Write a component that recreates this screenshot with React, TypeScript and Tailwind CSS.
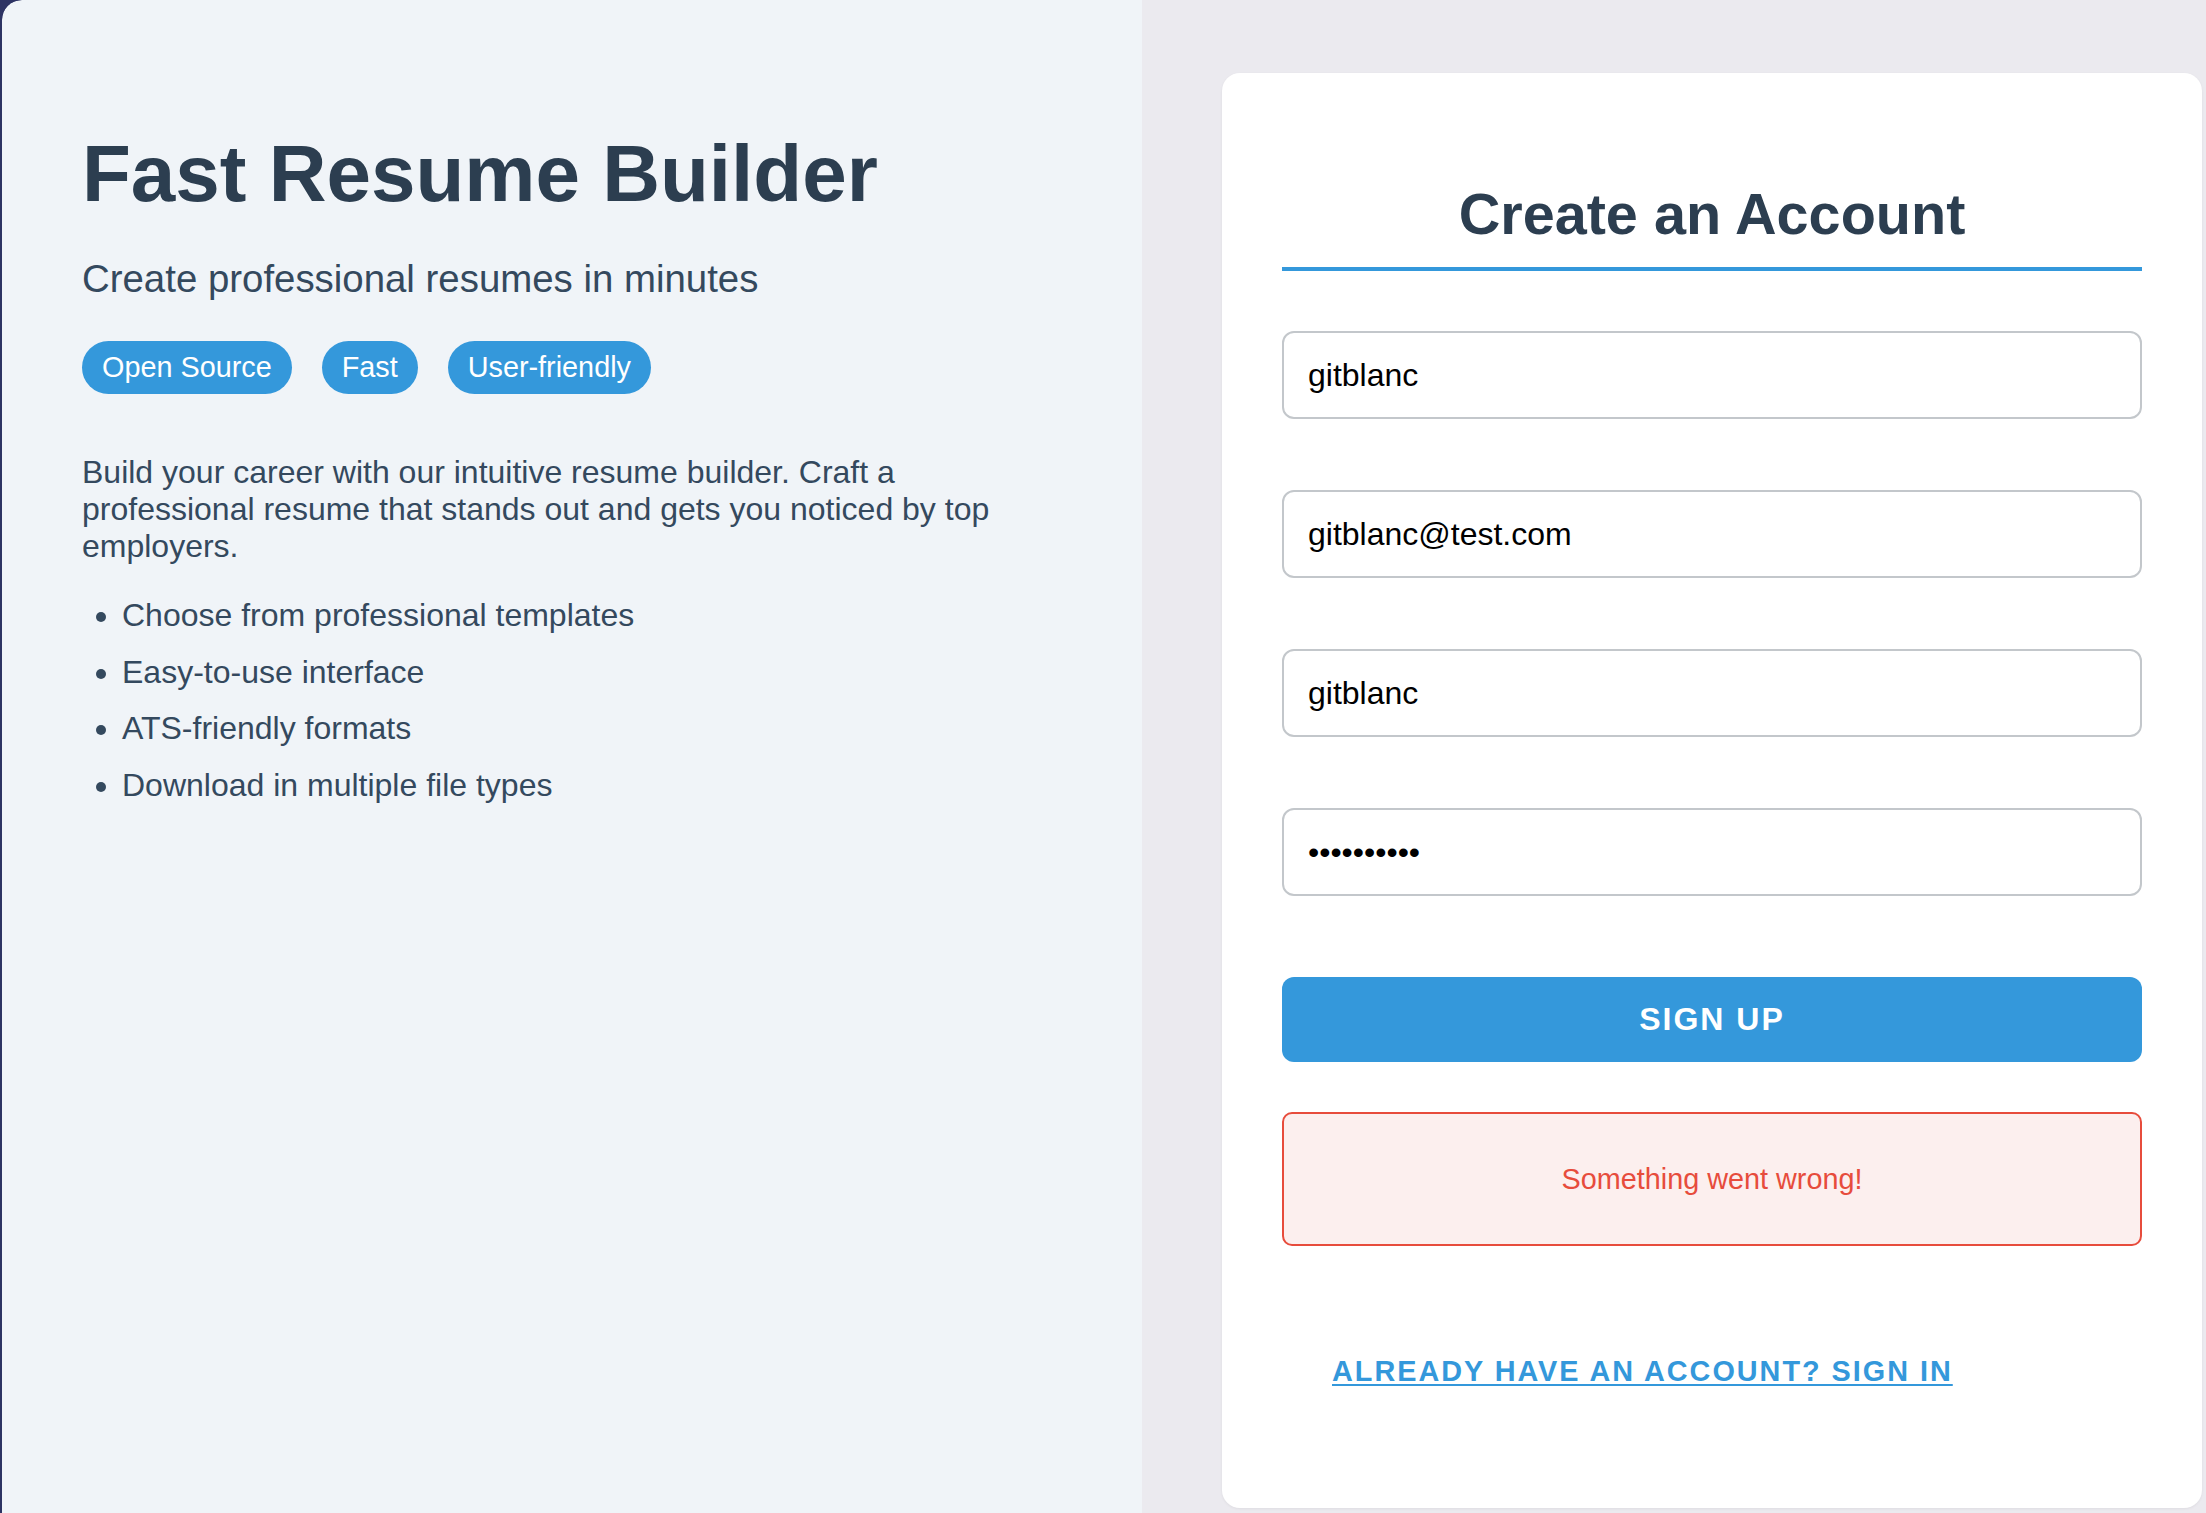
import React from 'react';

const features = [
	'Choose from professional templates',
	'Easy-to-use interface',
	'ATS-friendly formats',
	'Download in multiple file types',
];

const tags = ['Open Source', 'Fast', 'User-friendly'];

// 왼쪽 소개 영역
function Intro() {
	return (
		<section className="w-[1140px] shrink-0 bg-[#f0f4f8] rounded-tl-[20px] pt-[128px] pl-[80px] pr-[82px] text-[#34495e]">
			<h1 className="text-[80px] font-bold text-[#2c3e50]">Fast Resume Builder</h1>
			<p className="mt-[37px] text-[38.4px]">Create professional resumes in minutes</p>

			{/* 태그 */}
			<div className="mt-[40px] flex gap-[30px]">
				{tags.map((tag) => (
					<span
						key={tag}
						className="bg-[#3498db] text-white text-[28.8px] px-[20px] py-[10px] rounded-full"
					>
						{tag}
					</span>
				))}
			</div>

			<p className="mt-[60px] text-[32px]">
				Build your career with our intuitive resume builder. Craft a professional resume that
				stands out and gets you noticed by top employers.
			</p>

			<ul className="mt-[32px] pl-[40px] list-disc text-[32px]">
				{features.map((f) => (
					<li key={f} className="mb-[19.5px]">
						{f}
					</li>
				))}
			</ul>
		</section>
	);
}

function Field({ value, type = 'text' }: { value: string; type?: string }) {
	return (
		<input
			type={type}
			value={value}
			readOnly
			className="w-full h-[88px] border-2 border-[#c3c7cb] rounded-[12px] px-[24px] text-[32px] text-black bg-white outline-none"
		/>
	);
}

// 오른쪽 회원가입 카드
function SignUpCard() {
	return (
		<div className="mt-[73px] ml-[80px] w-[980px] h-[1435px] bg-white rounded-[18px] shadow-[0_1px_3px_rgba(0,0,0,0.06)] px-[60px] pt-[108px]">
			<h2 className="text-center text-[57.6px] font-bold text-[#2c3e50] pb-[20px] border-b-4 border-[#3498db]">
				Create an Account
			</h2>

			<div className="mt-[60px] flex flex-col gap-[71px]">
				<Field value="gitblanc" />
				<Field value="gitblanc@test.com" />
				<Field value="gitblanc" />
				<Field value="gitblanc12" type="password" />
			</div>

			<button className="mt-[81px] w-full h-[85px] bg-[#3498db] rounded-[12px] text-white text-[32px] font-bold tracking-[2px] uppercase">
				Sign Up
			</button>

			<div className="mt-[50px] h-[134px] border-2 border-[#e74c3c] bg-[#fcefee] rounded-[10px] flex items-center justify-center text-[#e74c3c] text-[28.8px]">
				Something went wrong!
			</div>

			<div className="mt-[109px] ml-[50px]">
				<a
					href="#"
					className="text-[#3498db] text-[28.8px] font-bold tracking-[2px] uppercase underline decoration-2 underline-offset-[3px]"
				>
					Already have an account? Sign in
				</a>
			</div>
		</div>
	);
}

export default function App() {
	return (
		<div
			className="h-[1513px] w-[2206px] bg-[#2d3363] overflow-hidden leading-[normal]"
			style={{ fontFamily: '"Liberation Sans", Arial, sans-serif' }}
		>
			<div className="ml-[2px] h-full flex rounded-tl-[20px] overflow-hidden">
				<Intro />
				<div className="flex-1 bg-[#ebeaef]">
					<SignUpCard />
				</div>
			</div>
		</div>
	);
}
